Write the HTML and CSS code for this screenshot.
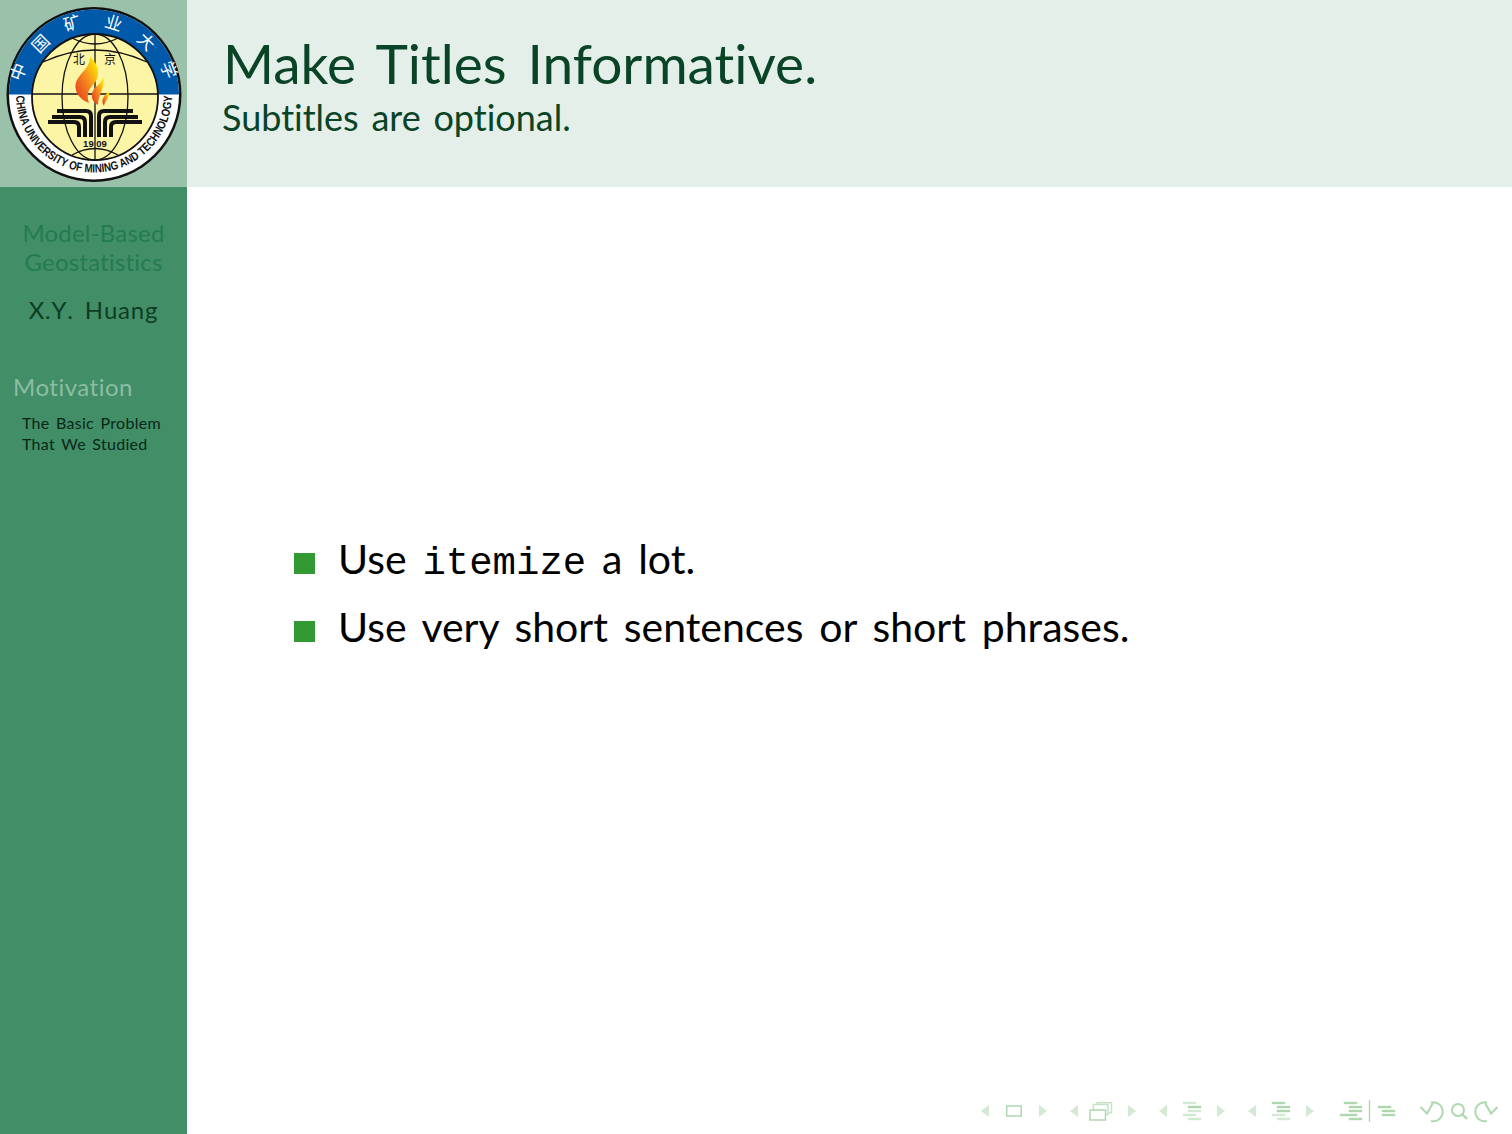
FILE: index.html
```html
<!DOCTYPE html>
<html lang="en">
<head>
  <meta charset="UTF-8" />
  <title>Make Titles Informative.</title>
  <link rel="stylesheet" href="styles.css">
</head>
<body>

<!-- Sidebar -->
<aside class="sidebar">
  <div class="logo-box">
    <svg class="logo" width="187" height="187" viewBox="0 0 187 187" role="img" aria-label="CUMT logo">
      <defs>
        <path id="band-bottom" d="M 16 94.5 A 78 78 0 0 0 172 94.5" />
        <linearGradient id="flame" x1="0" y1="1" x2="1" y2="0">
          <stop offset="0" stop-color="#e3301c" />
          <stop offset="0.5" stop-color="#f58a1f" />
          <stop offset="0.9" stop-color="#ffe800" />
        </linearGradient>
      </defs>
      <circle cx="94" cy="94.5" r="87.5" fill="#111" />
      <circle cx="94" cy="94.5" r="85" fill="#fff" />
      <path d="M 9 94.5 A 85 85 0 0 1 179 94.5 Z" fill="#0059a9" />
      <g class="logo-cn" font-size="17" text-anchor="middle">
        <text transform="translate(24 74) rotate(-69)">中</text>
        <text transform="translate(45 48) rotate(-45)">国</text>
        <text transform="translate(74 29) rotate(-17)">矿</text>
        <text transform="translate(112 29) rotate(17)">业</text>
        <text transform="translate(142 46) rotate(45)">大</text>
        <text transform="translate(163 72) rotate(69)">学</text>
      </g>
      <text class="logo-en" font-size="12"><textPath href="#band-bottom" startOffset="50%" text-anchor="middle" textLength="242" lengthAdjust="spacingAndGlyphs">CHINA UNIVERSITY OF MINING AND TECHNOLOGY</textPath></text>
      <circle cx="95" cy="97" r="63" fill="#fdf5a6" stroke="#111" stroke-width="1.8" />
      <g fill="none" stroke="#111" stroke-width="1.3">
        <ellipse cx="95" cy="97" rx="33" ry="63" />
        <path d="M 95 34 V 160" />
        <path d="M 32 94 H 158" />
        <path d="M 43 62 Q 95 38 147 62" />
        <path d="M 72 38 Q 95 50 118 38" />
        <path d="M 72 155 Q 95 142 118 155" />
      </g>
      <text class="logo-cn-dark" x="79" y="64" font-size="12" text-anchor="middle">北</text>
      <text class="logo-cn-dark" x="110" y="64" font-size="12" text-anchor="middle">京</text>
      <path d="M 90 57 C 100 65 101 78 92 86 C 87 91 87 97 89 103 C 80 100 72 90 77 80 C 81 72 90 68 90 57 Z" fill="url(#flame)" />
      <path d="M 103 77 C 106 88 98 94 98 105 C 89 100 91 90 97 86 C 100 84 102 81 103 77 Z" fill="url(#flame)" />
      <path d="M 109 92 C 110 98 105 100 104 106 C 100 100 104 95 109 92 Z" fill="url(#flame)" />
      <g id="wing" fill="none" stroke="#111" stroke-width="4">
        <path d="M 57 111 H 86 Q 91 111 91 116 V 137" />
        <path d="M 52 117 H 80 Q 85 117 85 122 V 137" />
        <path d="M 48 122 H 74 Q 79 122 79 127 V 137" />
      </g>
      <use href="#wing" transform="matrix(-1 0 0 1 190 0)" />
      <text class="logo-year" x="95" y="147" font-size="9.5" text-anchor="middle">19 09</text>
    </svg>
  </div>

  <div class="side-title">Model-Based<br>Geostatistics</div>
  <div class="side-author">X.Y. Huang</div>
  <div class="side-section">Motivation</div>
  <div class="side-sub">The Basic Problem<br>That We Studied</div>
</aside>

<div class="page">
  <header class="frame-head">
    <h1>Make Titles Informative.</h1>
    <p>Subtitles are optional.</p>
  </header>

  <main class="frame-body">
    <ul>
      <li>Use <code>itemize</code> a lot.</li>
      <li>Use very short sentences or short phrases.</li>
    </ul>
  </main>

  <!-- Beamer navigation symbols -->
  <footer class="nav-symbols">
    <svg width="530" height="30" viewBox="975 1098 530 30" aria-hidden="true">
      <g class="tri">
        <path d="M989 1105 V1117 L981 1111 Z" />
        <path d="M1039 1105 V1117 L1047 1111 Z" />
        <path d="M1078 1105 V1117 L1070 1111 Z" />
        <path d="M1128 1105 V1117 L1136 1111 Z" />
        <path d="M1167 1105 V1117 L1159 1111 Z" />
        <path d="M1217 1105 V1117 L1225 1111 Z" />
        <path d="M1256 1105 V1117 L1248 1111 Z" />
        <path d="M1306 1105 V1117 L1314 1111 Z" />
      </g>
      <g class="line">
        <rect x="1006.7" y="1106" width="14.5" height="10" />
        <rect x="1097" y="1102.7" width="14.5" height="10" class="soft" />
        <rect x="1093.5" y="1104.5" width="14.5" height="10" class="soft" fill="#fff" />
        <rect x="1090" y="1110" width="15.5" height="10" fill="#fff" />
      </g>
      <g class="bar-light">
        <rect x="1183" y="1102" width="13" height="2" />
        <rect x="1188" y="1110" width="13" height="2" />
        <rect x="1183" y="1114" width="13" height="2" />
        <rect x="1188" y="1118" width="13" height="2" />
        <rect x="1272" y="1114" width="13" height="2" />
        <rect x="1277" y="1118" width="13" height="2" />
      </g>
      <g class="bar">
        <rect x="1188" y="1106" width="13" height="2" />
        <rect x="1272" y="1102" width="13" height="2" />
        <rect x="1277" y="1106" width="13" height="2" />
        <rect x="1277" y="1110" width="13" height="2" />
        <rect x="1344" y="1102" width="13" height="2" />
        <rect x="1349" y="1106" width="13" height="2" />
        <rect x="1349" y="1110" width="13" height="2" />
        <rect x="1340" y="1114" width="17" height="2" />
        <rect x="1349" y="1118" width="13" height="2" />
        <rect x="1369" y="1100" width="1" height="22" />
        <rect x="1378" y="1106" width="13" height="2" />
        <rect x="1382" y="1110" width="13" height="2" />
        <rect x="1382" y="1114" width="13" height="2" />
      </g>
      <g class="line round">
        <path d="M1431 1102.5 A9.5 9.5 0 1 1 1431 1121" />
        <path d="M1420.5 1107 L1427 1113.5 L1433 1103" />
        <circle cx="1458" cy="1110" r="6" />
        <path d="M1462.5 1114.5 L1467 1119" stroke-width="2.4" />
        <path d="M1487 1102.5 A9.5 9.5 0 1 0 1487 1121" />
        <path d="M1497.5 1107 L1491 1113.5 L1485 1103" />
      </g>
    </svg>
  </footer>
</div>

</body>
</html>
```

FILE: styles.css
```css
* {
  box-sizing: border-box;
}
html, body {
  height: 100%;
}
body {
  margin: 0;
  display: flex;
  background: #fff;
  color: #000;
  font-family: Lato, "Open Sans", sans-serif;
  font-variant-ligatures: none;
}

/* --- sidebar --- */
.sidebar {
  width: 187px;
  flex-shrink: 0;
  background: #428e66;
}
.logo-box {
  height: 187px;
  background: #9ac2aa;
}
.logo {
  display: block;
}
.logo-cn {
  fill: #fff;
  font-family: "Noto Sans CJK SC", sans-serif;
}
.logo-cn-dark {
  fill: #111;
  font-family: "Noto Sans CJK SC", sans-serif;
}
.logo-en,
.logo-year {
  fill: #111;
  font-family: "Liberation Sans", sans-serif;
  font-weight: 700;
}

.side-title {
  margin-top: 31px;
  text-align: center;
  font-size: 24px;
  line-height: 29px;
  letter-spacing: 0.2px;
  color: #237c50;
}
.side-author {
  margin-top: 19px;
  text-align: center;
  font-size: 24px;
  line-height: 29px;
  letter-spacing: 0.8px;
  word-spacing: 4px;
  font-kerning: none;
  color: #0d3d24;
}
.side-section {
  margin-top: 48px;
  padding-left: 13px;
  font-size: 24px;
  line-height: 29px;
  letter-spacing: 0.5px;
  color: #8dbda3;
}
.side-sub {
  margin-top: 11px;
  padding-left: 22px;
  font-size: 16px;
  line-height: 21px;
  letter-spacing: 0.3px;
  word-spacing: 2px;
  color: #08281a;
}

/* --- frame --- */
.page {
  flex: 1;
  display: flex;
  flex-direction: column;
}
.frame-head {
  height: 187px;
  padding: 32px 0 0 36px;
  background: #e5efe9;
  color: #0a4426;
}
.frame-head h1 {
  margin: 0;
  font-size: 55px;
  font-weight: 400;
  line-height: 63px;
  word-spacing: 7px;
}
.frame-head p {
  margin: 0 0 0 -1px;
  font-size: 36px;
  line-height: 44px;
  word-spacing: 3.5px;
}

.frame-body {
  flex: 1;
  padding: 346px 0 0 107px;
}
.frame-body ul {
  list-style: none;
  margin: 0;
  padding: 0;
}
.frame-body li {
  position: relative;
  padding-left: 44px;
  margin-bottom: 16px;
  font-size: 41px;
  line-height: 52px;
  word-spacing: 5.3px;
}
.frame-body li + li {
  margin-top: -5px;
}
.frame-body li::before {
  content: "";
  position: absolute;
  left: 0;
  top: 20px;
  width: 21px;
  height: 21px;
  background: #339933;
}
.frame-body code {
  font-family: "Liberation Mono", monospace;
  font-size: 39px;
}

/* --- navigation symbols --- */
.nav-symbols {
  display: flex;
  justify-content: flex-end;
  height: 36px;
  padding-right: 7px;
}
.tri {
  fill: #d3e9d3;
}
.line {
  fill: none;
  stroke: #aed8ae;
  stroke-width: 1.5;
}
.line .soft {
  stroke: #c4e2c4;
}
.round {
  stroke-width: 2;
}
.bar {
  fill: #aed8ae;
  stroke: #aed8ae;
  stroke-width: 0.4;
}
.bar-light {
  fill: #d3e9d3;
  stroke: #d3e9d3;
  stroke-width: 0.4;
}
```
